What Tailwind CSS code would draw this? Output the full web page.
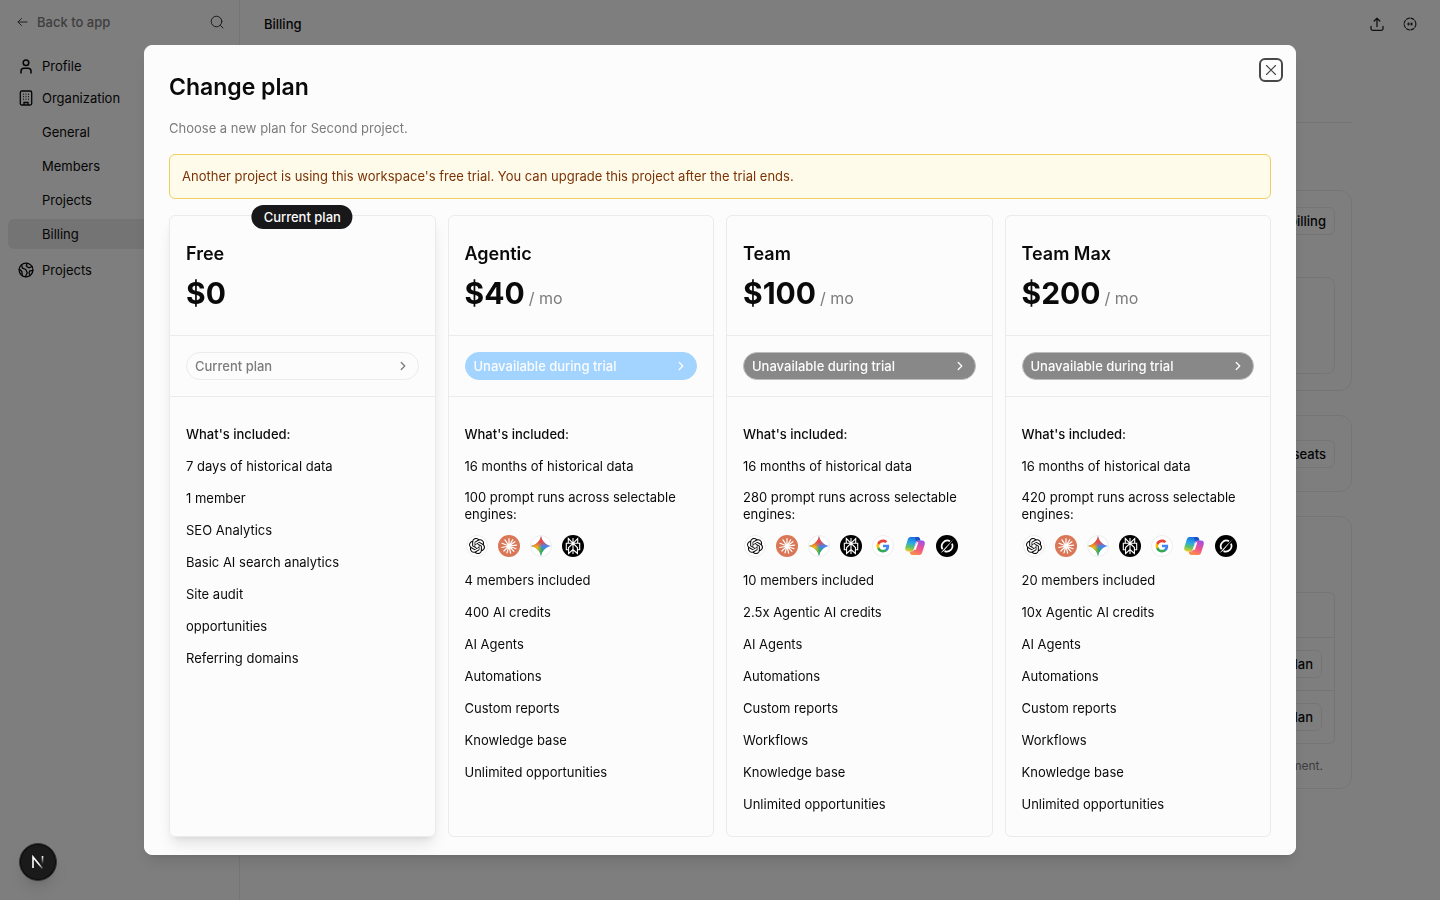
<!DOCTYPE html>
<html lang="en">
<head>
<meta charset="utf-8">
<meta name="viewport" content="width=device-width, initial-scale=1">
<title>Billing</title>
<script src="https://cdn.jsdelivr.net/npm/@tailwindcss/browser@4"></script>
</head>
<body class="bg-[#fcfcfc] font-['Inter',sans-serif] text-[13px] leading-[18px] text-[#0a0a0a]">

<svg class="hidden" aria-hidden="true">
  <symbol id="chevron" viewBox="0 0 16 16"><path d="M6 4l4 4-4 4" fill="none" stroke="currentColor" stroke-width="1.5" stroke-linecap="round" stroke-linejoin="round"/></symbol>
  <symbol id="openai" viewBox="0 0 22 22">
    <circle cx="11" cy="11" r="10.5" fill="#fff" stroke="#ededed"/>
    <path transform="translate(3 3) scale(.667)" fill="#0a0a0a" d="M22.2819 9.8211a5.9847 5.9847 0 0 0-.5157-4.9108 6.0462 6.0462 0 0 0-6.5098-2.9A6.0651 6.0651 0 0 0 4.9807 4.1818a5.9847 5.9847 0 0 0-3.9977 2.9 6.0462 6.0462 0 0 0 .7427 7.0966 5.98 5.98 0 0 0 .511 4.9107 6.051 6.051 0 0 0 6.5146 2.9001A5.9847 5.9847 0 0 0 13.2599 24a6.0557 6.0557 0 0 0 5.7718-4.2058 5.9894 5.9894 0 0 0 3.9977-2.9001 6.0557 6.0557 0 0 0-.7475-7.0729zm-9.022 12.6081a4.4755 4.4755 0 0 1-2.8764-1.0408l.1419-.0804 4.7783-2.7582a.7948.7948 0 0 0 .3927-.6813v-6.7369l2.02 1.1686a.071.071 0 0 1 .038.052v5.5826a4.504 4.504 0 0 1-4.4945 4.4944zm-9.6607-4.1254a4.4708 4.4708 0 0 1-.5346-3.0137l.142.0852 4.783 2.7582a.7712.7712 0 0 0 .7806 0l5.8428-3.3685v2.3324a.0804.0804 0 0 1-.0332.0615L9.74 19.9502a4.4992 4.4992 0 0 1-6.1408-1.6464zM2.3408 7.8956a4.485 4.485 0 0 1 2.3655-1.9728V11.6a.7664.7664 0 0 0 .3879.6765l5.8144 3.3543-2.0201 1.1685a.0757.0757 0 0 1-.071 0l-4.8303-2.7865A4.504 4.504 0 0 1 2.3408 7.872zm16.5963 3.8558L13.1038 8.364 15.1192 7.2a.0757.0757 0 0 1 .071 0l4.8303 2.7913a4.4944 4.4944 0 0 1-.6765 8.1042v-5.6772a.79.79 0 0 0-.407-.667zm2.0107-3.0231l-.142-.0852-4.7735-2.7818a.7759.7759 0 0 0-.7854 0L9.409 9.2297V6.8974a.0662.0662 0 0 1 .0284-.0615l4.8303-2.7866a4.4992 4.4992 0 0 1 6.6802 4.66zM8.3065 12.863l-2.02-1.1638a.0804.0804 0 0 1-.038-.0567V6.0742a4.4992 4.4992 0 0 1 7.3757-3.4537l-.142.0805L8.704 5.459a.7948.7948 0 0 0-.3927.6813zm1.0976-2.3654l2.602-1.4998 2.6069 1.4998v2.9994l-2.5974 1.4997-2.6067-1.4997Z"/>
  </symbol>
  <symbol id="claude" viewBox="0 0 22 22">
    <circle cx="11" cy="11" r="11" fill="#d97757"/>
    <path d="M11 11V3.6M11 11l3.7-6.3M11 11l5.9-4.3M11 11l7.5-.9M11 11l7 2.7M11 11l4.9 5.4M11 11l1.6 7.2M11 11l-2 6.9M11 11l-5.1 5M11 11l-7.2 1.5M11 11L4 8.3M11 11L7 4.8" stroke="#fff" stroke-width="1.2" stroke-linecap="round"/>
  </symbol>
  <symbol id="perplexity" viewBox="0 0 22 22">
    <circle cx="11" cy="11" r="11" fill="#000"/>
    <path d="M11 3v16M6.300 3.500l4.700 4.800 4.700-4.800v4.800H6.300zM6.800 14.700H4.300V8.300h13.400v6.400h-2.500M11 8.300l-4.400 4.200v6l4.400-4 4.400 4v-6z" fill="none" stroke="#fff" stroke-width="1.100"/>
  </symbol>
  <symbol id="google" viewBox="0 0 22 22">
    <circle cx="11" cy="11" r="10.5" fill="#fff" stroke="#ededed"/>
    <g transform="translate(4 4) scale(.583)">
      <path fill="#4285F4" d="M22.560 12.250c0-.78-.07-1.530-.2-2.250H12v4.260h5.920c-.26 1.370-1.040 2.530-2.210 3.310v2.770h3.570c2.080-1.920 3.280-4.740 3.280-8.090z"/>
      <path fill="#34A853" d="M12 23c2.970 0 5.460-.98 7.280-2.660l-3.570-2.770c-.98.66-2.230 1.060-3.710 1.060-2.860 0-5.290-1.930-6.160-4.530H2.180v2.840C3.990 20.530 7.700 23 12 23z"/>
      <path fill="#FBBC05" d="M5.840 14.090c-.22-.66-.35-1.360-.35-2.090s.13-1.430.35-2.090V7.070H2.180C1.430 8.550 1 10.220 1 12s.43 3.450 1.180 4.930l3.660-2.840z"/>
      <path fill="#EA4335" d="M12 5.380c1.620 0 3.060.56 4.210 1.640l3.150-3.150C17.450 2.090 14.970 1 12 1 7.700 1 3.990 3.470 2.180 7.070l3.660 2.840c.87-2.600 3.300-4.530 6.160-4.530z"/>
    </g>
  </symbol>
  <symbol id="grok" viewBox="0 0 22 22">
    <circle cx="11" cy="11" r="11" fill="#000"/>
    <path d="M14 6.200A5.700 5.700 0 0 0 6.600 14.300M16 8.600A5.700 5.700 0 0 1 8.500 16.100" fill="none" stroke="#fff" stroke-width="1.700"/>
    <path d="M4.500 18L9 12.900 18 3.800 8 15.700z" fill="#fff"/>
  </symbol>
</svg>
<!-- Gradient artwork stays outside display:none so its paint servers resolve -->
<svg class="absolute size-0" aria-hidden="true">
  <defs>
    <linearGradient id="gemA" x1="0" y1=".5" x2=".6" y2=".5"><stop offset=".1" stop-color="#fbbc04"/><stop offset=".5" stop-color="#fbbc04"/><stop offset=".9" stop-color="#fbbc04" stop-opacity="0"/></linearGradient>
    <linearGradient id="gemB" x1=".5" y1="0" x2=".55" y2=".55"><stop offset="0" stop-color="#f0483e"/><stop offset=".5" stop-color="#f0483e"/><stop offset="1" stop-color="#f0483e" stop-opacity="0"/></linearGradient>
    <linearGradient id="gemC" x1=".4" y1="1" x2=".55" y2=".5"><stop offset="0" stop-color="#1fb254"/><stop offset=".5" stop-color="#1fb254"/><stop offset="1" stop-color="#1fb254" stop-opacity="0"/></linearGradient>
    <linearGradient id="copA" x1=".5" y1="0" x2=".3" y2="1"><stop offset="0" stop-color="#1a6fe0"/><stop offset=".4" stop-color="#27a6e8"/><stop offset=".7" stop-color="#5cc26a"/><stop offset="1" stop-color="#e8d02a"/></linearGradient>
    <linearGradient id="copB" x1=".7" y1="0" x2=".3" y2="1"><stop offset="0" stop-color="#a24fe6"/><stop offset=".5" stop-color="#f0528c"/><stop offset="1" stop-color="#fb9246"/></linearGradient>
  </defs>
  <symbol id="gemini" viewBox="0 0 22 22">
    <circle cx="11" cy="11" r="10.5" fill="#fff" stroke="#ededed"/>
    <path d="M11 1c1 5.300 4.700 9 10 10-5.300 1-9 4.700-10 10-1-5.300-4.700-9-10-10 5.300-1 9-4.700 10-10z" fill="#4285f4"/>
    <path d="M11 1c1 5.300 4.700 9 10 10-5.300 1-9 4.700-10 10-1-5.300-4.700-9-10-10 5.300-1 9-4.700 10-10z" fill="url(#gemC)"/>
    <path d="M11 1c1 5.300 4.700 9 10 10-5.300 1-9 4.700-10 10-1-5.300-4.700-9-10-10 5.300-1 9-4.700 10-10z" fill="url(#gemA)"/>
    <path d="M11 1c1 5.300 4.700 9 10 10-5.300 1-9 4.700-10 10-1-5.300-4.700-9-10-10 5.300-1 9-4.700 10-10z" fill="url(#gemB)"/>
  </symbol>
  <symbol id="copilot" viewBox="0 0 22 22">
    <path d="M6.500 2h7c1.200 0 2 .7 2.400 1.800l.5 1.800h-2.200c-1.300 0-2 .7-2.400 2L9.700 14.500c-.4 1.400-1.200 2-2.500 2H4c-2.200 0-3.300-1.600-2.700-3.900l2.400-7.800C4.300 3 5.100 2 6.500 2z" fill="url(#copA)"/>
    <path d="M15.500 20h-7c-1.200 0-2-.7-2.400-1.800l-.5-1.800h2.200c1.300 0 2-.7 2.400-2l2.100-6.900c.4-1.400 1.200-2 2.500-2H18c2.200 0 3.300 1.600 2.700 3.900l-2.400 7.800C17.700 19 16.900 20 15.500 20z" fill="url(#copB)"/>
    <path d="M13.500 2c1.200 0 2 .7 2.400 1.800l.6 1.700h-2.300c-1 0-1.700.4-2.100 1.300L11 2z" fill="#1b4fc4"/>
    <path d="M12.800 7.300h1.500l-2.400 7.500h-2.200z" fill="#fff"/>
  </symbol>
</svg>

<div class="flex min-h-screen">
  <aside class="w-60 shrink-0 border-r border-[#ebebeb]">
    <div class="flex h-[43px] items-center justify-between pr-[15px] pl-4">
      <a href="#" class="flex items-center gap-2 font-medium text-[#7c7c7c]">
        <svg class="w-[13px]" viewBox="0 0 13 13" fill="none" stroke="#444" stroke-linecap="round" stroke-linejoin="round"><path d="M11 7H2M5.500 3.500L2 7l3.500 3.500"/></svg>
        Back to app
      </a>
      <button aria-label="Search"><svg class="size-[14px]" viewBox="0 0 14 14" fill="none" stroke="#333" stroke-linecap="round"><circle cx="6.500" cy="6.500" r="5.300"/><path d="M10.500 10.500l2.500 2.500"/></svg></button>
    </div>
    <nav class="flex flex-col gap-[2px] px-2 pt-2">
      <a href="#" class="flex h-[30px] items-center gap-2 px-[10px]">
        <svg class="size-4" viewBox="0 0 16 16" fill="none" stroke="currentColor" stroke-width="1.500" stroke-linecap="round"><circle cx="8" cy="4.700" r="2.800"/><path d="M3 15v-1.800a3 3 0 0 1 3-3h4a3 3 0 0 1 3 3V15"/></svg>
        Profile
      </a>
      <a href="#" class="flex h-[30px] items-center gap-2 px-[10px]">
        <svg class="size-4" viewBox="0 0 16 16" fill="none" stroke="currentColor" stroke-width="1.300"><rect x="2.300" y="1" width="11.400" height="14" rx="1.500"/><path d="M6 15v-2.500h4V15" /><path d="M5 4.200h1M7.500 4.200h1M10 4.200h1M5 6.700h1M7.500 6.700h1M10 6.700h1M5 9.200h1M7.500 9.200h1M10 9.200h1" stroke-width="1"/></svg>
        Organization
      </a>
      <div class="mt-[2px] mb-1 flex flex-col gap-1">
        <a href="#" class="flex h-[30px] items-center rounded-md pl-[34px]">General</a>
        <a href="#" class="flex h-[30px] items-center rounded-md pl-[34px]">Members</a>
        <a href="#" class="flex h-[30px] items-center rounded-md pl-[34px]">Projects</a>
        <a href="#" aria-current="page" class="flex h-[30px] items-center rounded-md bg-[#e8e8e8] pl-[34px]">Billing</a>
      </div>
      <a href="#" class="flex h-[30px] items-center gap-2 px-[10px]">
        <svg class="size-4" viewBox="0 0 16 16" fill="none" stroke="currentColor" stroke-width="1.300" stroke-linecap="round" stroke-linejoin="round"><circle cx="8" cy="8" r="6.900"/><path d="M3.500 2.900l1 3.300 3.300 1.300 1.400 3.200-1.700 4M1.300 7l2.500 2.500.5 4.200M9 1.300L8.300 4l2.400 1.800 3.600-1.300M14.800 8.500l-3 .3-.8 2 1 2.800"/></svg>
        Projects
      </a>
    </nav>
  </aside>

  <main class="min-w-0 flex-1">
    <header class="flex h-12 items-center justify-between pr-[22px] pl-6 font-medium">
      <h1>Billing</h1>
      <div class="flex items-center gap-[17px]">
        <button aria-label="Share"><svg class="size-4" viewBox="0 0 16 16" fill="none" stroke="#222" stroke-width="1.300" stroke-linecap="round" stroke-linejoin="round"><path d="M8 10.500V2.500M5.200 5L8 2.300 10.800 5M2 10.500v2.300c0 .9.600 1.500 1.500 1.500h9c.9 0 1.500-.6 1.500-1.500v-2.300"/></svg></button>
        <button aria-label="Assistant"><svg class="size-4" viewBox="0 0 16 16" fill="none" stroke="#222"><circle cx="8" cy="8" r="5.900" stroke-width="1.100" stroke-dasharray="3.900 .7"/><path d="M6.500 7.400v1.200M9.500 7.400v1.200" stroke-width="2" stroke-linecap="round"/></svg></button>
      </div>
    </header>

    <div class="mx-auto max-w-5xl">
      <div class="h-[75px] border-b border-[#ebebeb]"></div>
      <section class="mt-[67px] h-[201px] rounded-xl border border-[#ebebeb] p-4" aria-label="Billing details">
        <div class="flex justify-end"><button class="h-7 rounded-md border border-[#ebebeb] px-2 font-medium">Manage billing</button></div>
        <div class="mt-[42px] h-[97px] rounded-lg border border-[#ebebeb]"></div>
      </section>
      <section class="mt-6 flex h-[77px] items-center justify-end rounded-xl border border-[#ebebeb] px-4" aria-label="Seats">
        <button class="h-7 rounded-md border border-[#ebebeb] px-2 font-medium">Manage seats</button>
      </section>
      <section class="mt-6 h-[273px] rounded-xl border border-[#ebebeb] px-4 pt-[75px]" aria-label="Projects">
        <div class="rounded-md border border-[#ebebeb]">
          <div class="h-11"></div>
          <div class="flex h-[53px] items-center justify-end border-t border-[#ebebeb] px-3"><button class="h-7 rounded-md border border-[#ebebeb] px-2 font-medium">Change plan</button></div>
          <div class="flex h-[53px] items-center justify-end border-t border-[#ebebeb] px-3"><button class="h-7 rounded-md border border-[#ebebeb] px-2 font-medium">Change plan</button></div>
        </div>
        <p class="mt-[13px] pr-3 text-right text-[12px] text-[#7c7c7c]">payment.</p>
      </section>
    </div>
  </main>
</div>

<div class="fixed inset-0 flex items-center justify-center bg-black/50">
  <div role="dialog" aria-modal="true" aria-labelledby="dialog-title" class="relative flex h-[90vh] w-4/5 max-w-6xl flex-col rounded-lg border border-[#fcfcfc] bg-[#fcfcfc] px-6 pt-6 pb-[17px] shadow-lg">
    <button aria-label="Close" class="absolute top-3 right-3 flex size-6 items-center justify-center rounded-md border-2 border-[#484848]">
      <svg class="size-4" viewBox="0 0 16 16" fill="none" stroke="#444" stroke-width="1.100" stroke-linecap="round"><path d="M3.500 3.500l9 9M12.500 3.500l-9 9"/></svg>
    </button>
    <h2 id="dialog-title" class="text-[23px] leading-[34px] font-semibold">Change plan</h2>
    <p class="mt-[15px] text-[#7c7c7c]">Choose a new plan for Second project.</p>
    <div role="status" class="mt-[17px] rounded-md border border-[#f0d060] bg-[#fffbeb] px-3 py-[13px] leading-[17px] text-[#7b3306]">Another project is using this workspace's free trial. You can upgrade this project after the trial ends.</div>

    <div class="mt-4 grid flex-1 grid-cols-4 gap-3">
      <section class="relative flex flex-col rounded-md border border-[#ebebeb] shadow-lg">
        <span class="absolute -top-[11px] left-1/2 flex h-6 -translate-x-1/2 items-center rounded-full bg-[#18181b] px-3 font-medium whitespace-nowrap text-[#fcfcfc]">Current plan</span>
        <div class="border-b border-[#ebebeb] px-4 py-6">
          <h3 class="text-[18px] leading-[27px] font-semibold">Free</h3>
          <p class="mt-2 text-[30px] leading-9 font-bold">$0</p>
        </div>
        <div class="border-b border-[#ebebeb] p-4">
          <button disabled class="flex h-7 w-full items-center justify-between rounded-full border border-[#ebebeb] px-2 font-medium text-[#7c7c7c]">Current plan<svg class="size-[14px]"><use href="#chevron"/></svg></button>
        </div>
        <div class="px-4 pt-7">
          <h4 class="font-medium">What's included:</h4>
          <ul class="mt-[14px] flex flex-col gap-[14px]">
            <li>7 days of historical data</li><li>1 member</li><li>SEO Analytics</li><li>Basic AI search analytics</li><li>Site audit</li><li>opportunities</li><li>Referring domains</li>
          </ul>
        </div>
      </section>

      <section class="flex flex-col rounded-md border border-[#ebebeb]">
        <div class="border-b border-[#ebebeb] px-4 py-6">
          <h3 class="text-[18px] leading-[27px] font-semibold">Agentic</h3>
          <p class="mt-2 text-[30px] leading-9 font-bold">$40<span class="ml-1 text-[16px] leading-none font-normal text-[#7c7c7c]">/ mo</span></p>
        </div>
        <div class="border-b border-[#ebebeb] p-4">
          <button disabled class="flex h-7 w-full items-center justify-between rounded-full border border-[#a2d4ff] bg-[#a2d4ff] px-2 font-medium text-[#fcfcfc]">Unavailable during trial<svg class="size-[14px]"><use href="#chevron"/></svg></button>
        </div>
        <div class="px-4 pt-7">
          <h4 class="font-medium">What's included:</h4>
          <ul class="mt-[14px] flex flex-col gap-[14px]">
            <li>16 months of historical data</li>
            <li class="leading-[17px]">100 prompt runs across selectable engines:
              <div class="mt-3 flex gap-[10px] px-px">
                <svg class="size-[22px]"><use href="#openai"/></svg><svg class="size-[22px]"><use href="#claude"/></svg><svg class="size-[22px]"><use href="#gemini"/></svg><svg class="size-[22px]"><use href="#perplexity"/></svg>
              </div>
            </li>
            <li>4 members included</li><li>400 AI credits</li><li>AI Agents</li><li>Automations</li><li>Custom reports</li><li>Knowledge base</li><li>Unlimited opportunities</li>
          </ul>
        </div>
      </section>

      <section class="flex flex-col rounded-md border border-[#ebebeb]">
        <div class="border-b border-[#ebebeb] px-4 py-6">
          <h3 class="text-[18px] leading-[27px] font-semibold">Team</h3>
          <p class="mt-2 text-[30px] leading-9 font-bold">$100<span class="ml-1 text-[16px] leading-none font-normal text-[#7c7c7c]">/ mo</span></p>
        </div>
        <div class="border-b border-[#ebebeb] p-4">
          <button disabled class="flex h-7 w-full items-center justify-between rounded-full border border-[#bdbdbd] bg-[#888888] px-2 font-medium text-[#fcfcfc]">Unavailable during trial<svg class="size-[14px]"><use href="#chevron"/></svg></button>
        </div>
        <div class="px-4 pt-7">
          <h4 class="font-medium">What's included:</h4>
          <ul class="mt-[14px] flex flex-col gap-[14px]">
            <li>16 months of historical data</li>
            <li class="leading-[17px]">280 prompt runs across selectable engines:
              <div class="mt-3 flex gap-[10px] px-px">
                <svg class="size-[22px]"><use href="#openai"/></svg><svg class="size-[22px]"><use href="#claude"/></svg><svg class="size-[22px]"><use href="#gemini"/></svg><svg class="size-[22px]"><use href="#perplexity"/></svg><svg class="size-[22px]"><use href="#google"/></svg><svg class="size-[22px]"><use href="#copilot"/></svg><svg class="size-[22px]"><use href="#grok"/></svg>
              </div>
            </li>
            <li>10 members included</li><li>2.5x Agentic AI credits</li><li>AI Agents</li><li>Automations</li><li>Custom reports</li><li>Workflows</li><li>Knowledge base</li><li>Unlimited opportunities</li>
          </ul>
        </div>
      </section>

      <section class="flex flex-col rounded-md border border-[#ebebeb]">
        <div class="border-b border-[#ebebeb] px-4 py-6">
          <h3 class="text-[18px] leading-[27px] font-semibold">Team Max</h3>
          <p class="mt-2 text-[30px] leading-9 font-bold">$200<span class="ml-1 text-[16px] leading-none font-normal text-[#7c7c7c]">/ mo</span></p>
        </div>
        <div class="border-b border-[#ebebeb] p-4">
          <button disabled class="flex h-7 w-full items-center justify-between rounded-full border border-[#bdbdbd] bg-[#888888] px-2 font-medium text-[#fcfcfc]">Unavailable during trial<svg class="size-[14px]"><use href="#chevron"/></svg></button>
        </div>
        <div class="px-4 pt-7">
          <h4 class="font-medium">What's included:</h4>
          <ul class="mt-[14px] flex flex-col gap-[14px]">
            <li>16 months of historical data</li>
            <li class="leading-[17px]">420 prompt runs across selectable engines:
              <div class="mt-3 flex gap-[10px] px-px">
                <svg class="size-[22px]"><use href="#openai"/></svg><svg class="size-[22px]"><use href="#claude"/></svg><svg class="size-[22px]"><use href="#gemini"/></svg><svg class="size-[22px]"><use href="#perplexity"/></svg><svg class="size-[22px]"><use href="#google"/></svg><svg class="size-[22px]"><use href="#copilot"/></svg><svg class="size-[22px]"><use href="#grok"/></svg>
              </div>
            </li>
            <li>20 members included</li><li>10x Agentic AI credits</li><li>AI Agents</li><li>Automations</li><li>Custom reports</li><li>Workflows</li><li>Knowledge base</li><li>Unlimited opportunities</li>
          </ul>
        </div>
      </section>
    </div>
  </div>
</div>

<button aria-label="Open Next.js Dev Tools" class="fixed bottom-[19px] left-[19px] flex size-[38px] items-center justify-center rounded-full border border-[#333] bg-[#1a1a1a] shadow-lg ring-1 ring-black/60 ring-inset">
  <svg class="size-4" viewBox="0 0 16 16" fill="none" stroke-width="1.600">
    <defs>
      <linearGradient id="nDiag" x1="0" y1="0" x2="1" y2="1"><stop offset=".6" stop-color="#fff"/><stop offset="1" stop-color="#fff" stop-opacity=".2"/></linearGradient>
      <linearGradient id="nStem" x1="0" y1="2" x2="0" y2="10" gradientUnits="userSpaceOnUse"><stop stop-color="#fff"/><stop offset="1" stop-color="#fff" stop-opacity="0"/></linearGradient>
    </defs>
    <path d="M3 14V3l9.500 11.500" stroke="url(#nDiag)"/><path d="M12.500 2v8" stroke="url(#nStem)"/>
  </svg>
</button>
</body>
</html>
